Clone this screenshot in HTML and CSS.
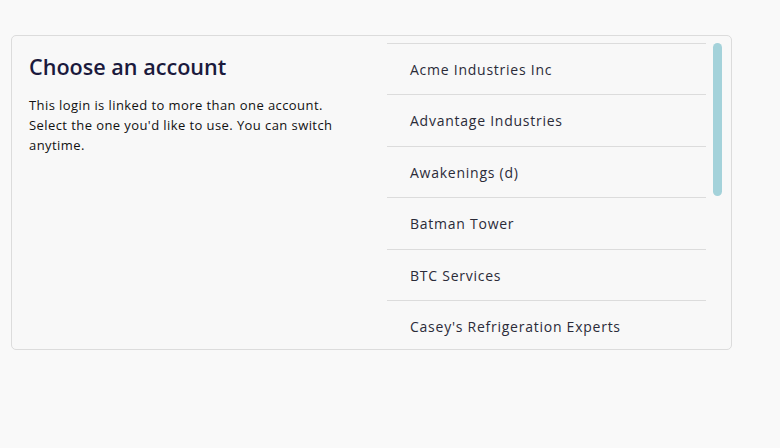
FILE: index.html
```
<!DOCTYPE html>
<html>
<head>
<meta charset="utf-8">
<link rel="stylesheet" href="styles.css">
</head>
<body>
<div class="card">
  <div class="intro">
    <h1 class="title">Choose an account</h1>
    <p class="desc">This login is linked to more than one account. Select the one you'd like to use. You can switch anytime.</p>
  </div>
  <div class="picker">
    <ul class="accounts">
      <li class="account">Acme Industries Inc</li>
      <li class="account">Advantage Industries</li>
      <li class="account">Awakenings (d)</li>
      <li class="account">Batman Tower</li>
      <li class="account">BTC Services</li>
      <li class="account">Casey's Refrigeration Experts</li>
    </ul>
    <div class="track"><div class="thumb"></div></div>
  </div>
</div>
</body>
</html>
```
FILE: styles.css
```
html, body {
  margin: 0;
  padding: 0;
  background: #f9f9f9;
  font-family: "Open Sans", "Liberation Sans", sans-serif;
}
body {
  width: 780px;
  height: 448px;
  overflow: hidden;
}
.card {
  box-sizing: border-box;
  margin: 35px 0 0 11px;
  width: 721px;
  height: 315px;
  border: 1px solid #dcdcdc;
  border-radius: 5px;
  background: #f8f8f8;
  display: flex;
  padding: 7px 8px 0 17px;
  overflow: hidden;
}
.intro {
  width: 320px;
  flex: none;
}
.title {
  margin: 9px 0 0 0;
  font-size: 21.6px;
  line-height: 30px;
  font-weight: 600;
  color: #1b1a3d;
}
.desc {
  margin: 13px 0 0 0;
  font-size: 13px;
  line-height: 20px;
  letter-spacing: 0.42px;
  color: #111;
}
.picker {
  margin-left: 38px;
  display: flex;
  gap: 7px;
  height: 100%;
}
.accounts {
  list-style: none;
  margin: 0;
  padding: 0;
  width: 319px;
  overflow: hidden;
  border-top: 1px solid #dcdcdc;
}
.account {
  height: 50.4px;
  line-height: 51px;
  padding-left: 23px;
  border-bottom: 1px solid #dcdcdc;
  font-size: 14px;
  letter-spacing: 0.75px;
  color: #2b2b38;
  white-space: nowrap;
}
.track {
  width: 9px;
}
.thumb {
  height: 153px;
  border-radius: 5px;
  background: #a4d2da;
}
```
